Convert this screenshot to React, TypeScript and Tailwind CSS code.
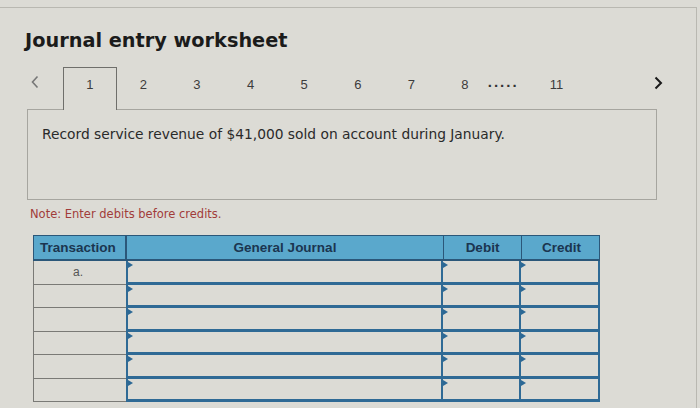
import React from "react";

const tabs = ["1", "2", "3", "4", "5", "6", "7", "8"];
const rows = ["a.", "", "", "", "", ""];

const Flag = () => (
  <span className="absolute left-0 top-[1px] w-0 h-0 border-t-[3px] border-b-[3px] border-l-[5px] border-t-transparent border-b-transparent border-l-[#2c6895]" />
);

const InputCell = ({ first }: { first?: boolean }) => (
  <div
    className={`relative h-full border-b-[3px] border-r-[2px] border-[#2f6a95] ${
      first ? "border-l-[2px]" : ""
    }`}
  >
    <Flag />
  </div>
);

export default function App() {
  return (
    <div className="w-[700px] h-[408px] overflow-hidden bg-[#dcdbd5] pt-[7px] font-['DejaVu_Sans',sans-serif]">
      <div className="h-[401px] w-[697px] border-t border-r border-[#b9b8b1]">
        {/* Title */}
        <h1 className="pl-[25px] pt-[21px] text-[19.3px] leading-[23px] font-bold text-[#1b1b1b]">
          Journal entry worksheet
        </h1>

        {/* Tabs */}
        <div className="mt-[14px] ml-[27px] w-[630px]">
          <div className="flex items-end h-[43px] font-['Liberation_Sans',Arial,sans-serif] text-[13px] text-[#3c3c3c]">
            <div className="w-[36px] h-full flex items-start pt-[8px] pl-[4px]">
              <svg width="8" height="14" viewBox="0 0 8 14" className="mt-[1px]">
                <path d="M6.5 1.5 L1.5 7 L6.5 12.5" fill="none" stroke="#777" strokeWidth="1.6" />
              </svg>
            </div>
            {tabs.map((t, i) => (
              <div
                key={t}
                className={`w-[53.6px] h-full flex justify-center ${
                  i === 0
                    ? "relative z-10 -mb-px h-[44px] pt-[7px] border-t border-l border-r border-[#6f6f6b] bg-[#dcdbd5]"
                    : "pt-[9px]"
                }`}
              >
                {t}
              </div>
            ))}
            <div className="h-full pt-[5px] -ml-[4px] w-[40px] text-[15px] font-bold tracking-[2px] text-[#333]">
              .....
            </div>
            <div className="h-full pt-[9px] ml-[22px]">11</div>
            <div className="h-full pt-[10px] ml-auto mr-[-6px]">
              <svg width="9" height="14" viewBox="0 0 9 14">
                <path d="M1.5 1.5 L7 7 L1.5 12.5" fill="none" stroke="#1a1a1a" strokeWidth="2" />
              </svg>
            </div>
          </div>

          {/* Question box */}
          <div className="h-[91px] border border-[#a6a59f] pl-[14px] pt-[16px] text-[13.8px] leading-[16px] text-[#2a2a2a]">
            Record service revenue of $41,000 sold on account during January.
          </div>
        </div>

        {/* Note */}
        <p className="ml-[30px] mt-[7px] text-[11.5px] leading-[14px] text-[#a13c3a]">
          Note: Enter debits before credits.
        </p>

        {/* Table */}
        <div className="ml-[33px] mt-[14px] w-[567px] font-['Liberation_Sans',Arial,sans-serif]">
          <div className="grid grid-cols-[93px_317px_78px_79px] h-[26px] bg-[#5aa8cc] border border-b-2 border-[#2b5779] text-[13.5px] font-bold text-[#1b3550]">
            <div className="flex items-center pl-[6px] pt-[1px] border-r-2 border-[#2b5779]">Transaction</div>
            <div className="flex items-center justify-center pt-[1px] border-r border-[#2b5779]">General Journal</div>
            <div className="flex items-center justify-center pt-[2px] border-r border-[#2b5779]">Debit</div>
            <div className="flex items-center justify-center pt-[2px]">Credit</div>
          </div>
          {rows.map((r, i) => (
            <div key={i} className="grid grid-cols-[93px_317px_78px_79px] h-[23.5px]">
              <div className="flex items-center justify-center pr-[4px] border-l border-b border-[#7a7a76] text-[12px] text-[#555]">
                {r}
              </div>
              <InputCell first />
              <InputCell />
              <InputCell />
            </div>
          ))}
        </div>
      </div>
    </div>
  );
}
